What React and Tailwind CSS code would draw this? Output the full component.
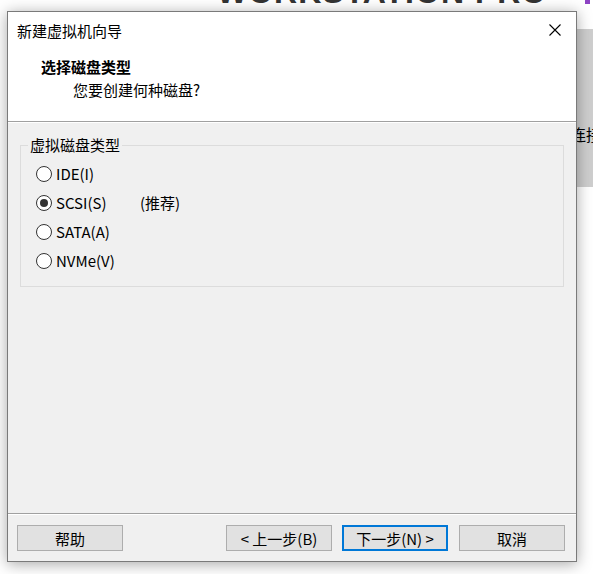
const font = { fontFamily: '"Noto Sans CJK SC", "Microsoft YaHei", sans-serif' };

const Radio = ({ label, checked, note }) => {
    return (
        <div className="h-[29px] flex items-center">
            <div className="w-4 h-4 rounded-full border border-[#333333] bg-white flex items-center justify-center">
                {checked && <div className="w-2 h-2 rounded-full bg-[#333333]" />}
            </div>
            <span className="ml-1 text-[15px] leading-none text-black">{label}</span>
            {note && <span className="absolute left-[119px] text-[15px] leading-none text-black">{note}</span>}
        </div>
    )
}

const Button = ({ children, primary }) => {
    return (
        <button
            className={
                primary
                    ? 'w-[106px] h-[26px] bg-[#e1e1e1] border-2 border-[#0078d7] text-[15px] leading-none text-black flex items-center justify-center'
                    : 'w-[106px] h-[26px] bg-[#e1e1e1] border border-[#adadad] text-[15px] leading-none text-black flex items-center justify-center'
            }
        >
            {children}
        </button>
    )
}

const App = () => {
    return (
        <div className="relative w-[593px] h-[574px] bg-white overflow-hidden" style={font}>
            {/* background application behind the wizard */}
            <div className="absolute left-[217px] top-[-24px] text-[32px] font-bold leading-none tracking-[1px] text-[#333333] whitespace-nowrap" style={{ fontFamily: '"Liberation Sans", sans-serif' }}>
                WORKSTATION PRO
            </div>
            <div className="absolute left-[585px] top-0 w-[5px] h-[4px] bg-[#8e44c4]" />
            <div className="absolute left-[560px] top-[29px] w-[40px] h-[158px] bg-[#cecece]">
                <span className="absolute left-[10px] top-[97px] text-[16px] leading-none text-black whitespace-nowrap">连接</span>
            </div>

            {/* wizard dialog */}
            <div className="absolute left-[7px] top-[11px] w-[570px] h-[551px] border border-[#7a7a7a] bg-[#f0f0f0] flex flex-col shadow-[0_2px_14px_rgba(0,0,0,0.35)]">
                <div className="h-[109px] bg-white flex flex-col">
                    <div className="h-[36px] flex items-center justify-between pl-[9px] pr-[15px]">
                        <span className="text-[15px] leading-none text-black">新建虚拟机向导</span>
                        <svg width="12" height="12" viewBox="0 0 12 12">
                            <path d="M0.5 0.5 L11.5 11.5 M11.5 0.5 L0.5 11.5" stroke="#000" strokeWidth="1.1" fill="none" />
                        </svg>
                    </div>
                    <div className="h-[23px] mt-[7px] flex items-center pl-[33px] text-[15px] font-bold leading-none text-black">
                        选择磁盘类型
                    </div>
                    <div className="h-[23px] flex items-center pl-[65px] text-[15px] leading-none text-black">
                        您要创建何种磁盘?
                    </div>
                </div>
                <div className="h-px bg-[#a0a0a0]" />
                <div className="h-px bg-white" />

                <div className="flex-1 px-3 pt-[22px]">
                    <div className="relative h-[142px] border border-[#dcdcdc] pt-[13px] pl-[15px]">
                        <span className="absolute left-[7px] top-[-10px] px-[2px] bg-[#f0f0f0] text-[15px] leading-[18px] text-black">虚拟磁盘类型</span>
                        <Radio label="IDE(I)" />
                        <Radio label="SCSI(S)" checked note="(推荐)" />
                        <Radio label="SATA(A)" />
                        <Radio label="NVMe(V)" />
                    </div>
                </div>

                <div className="h-px bg-[#a0a0a0]" />
                <div className="h-px bg-white" />
                <div className="h-[46px] flex items-start pt-[10px] pl-[9px] pr-[11px]">
                    <Button>帮助</Button>
                    <div className="flex-1" />
                    <div className="flex gap-[10px]">
                        <Button>&lt; 上一步(B)</Button>
                        <Button primary>下一步(N) &gt;</Button>
                        <div className="ml-px">
                            <Button>取消</Button>
                        </div>
                    </div>
                </div>
            </div>
        </div>
    )
}

export default App
